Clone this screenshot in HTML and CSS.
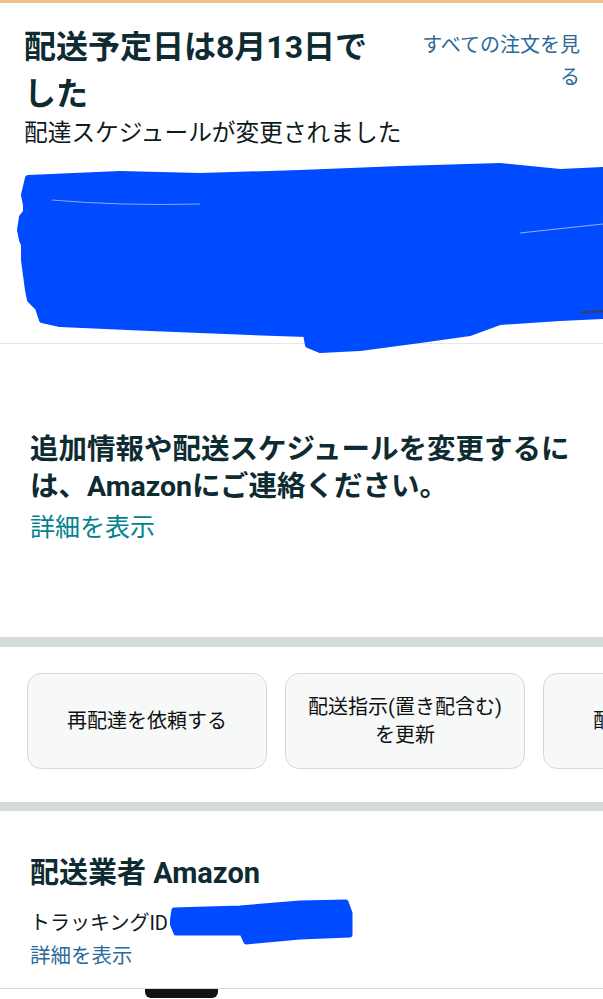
FILE: index.html
```html
<!DOCTYPE html>
<html lang="ja">
<head>
<meta charset="utf-8">
<title>配送状況</title>
<link rel="stylesheet" href="styles.css">
</head>
<body>
<div class="topbar"></div>
<section class="header">
  <div class="head-row">
    <h1 class="title">配送予定日は8月13日でした</h1>
    <a class="all-orders">すべての注文を見る</a>
  </div>
  <p class="subtitle">配達スケジュールが変更されました</p>
  <div class="product">
    <svg class="redact-main" viewBox="0 0 603 200" width="603" height="200" aria-hidden="true">
      <path fill="#004bff" stroke="#004bff" stroke-width="6" stroke-linejoin="round"
        d="M28 18 L120 14 L200 16 L300 13 L400 9 L500 6 L520 8 L560 12 L603 10 L603 156 L560 158 L500 162 L470 173 L420 180 L360 188 L320 190 L308 185 L306 174 L250 172 L150 168 L60 164 L42 160 L38 148 L30 140 L28 130 L26 115 L24 100 L24 85 L22 80 L20 70 L22 57 L26 52 L26 45 L24 35 Z"/>
      <path fill="none" stroke="#8fa6e8" stroke-width="1" d="M52 40 Q 120 46 200 44"/>
      <path fill="none" stroke="#9aaee6" stroke-width="1" d="M520 73 L603 64"/>
      <path fill="none" stroke="#3a3f55" stroke-width="2" d="M580 153 L603 151"/>
    </svg>
  </div>
</section>

<section class="contact">
  <p class="contact-text">追加情報や配送スケジュールを変更するには、Amazonにご連絡ください。</p>
  <a class="detail-teal">詳細を表示</a>
</section>

<div class="band"></div>

<section class="actions">
  <button class="action-btn">再配達を依頼する</button>
  <button class="action-btn">配送指示(置き配含む)<br>を更新</button>
  <button class="action-btn">配達状況を確認</button>
</section>

<div class="band band-2"></div>

<section class="carrier">
  <h2 class="carrier-title">配送業者 Amazon</h2>
  <div class="tracking">
    <span class="tracking-label">トラッキングID</span>
    <svg class="redact-small" viewBox="0 0 190 50" width="190" height="50" aria-hidden="true">
      <path fill="#004bff" stroke="#004bff" stroke-width="5" stroke-linejoin="round"
        d="M4 11 L70 9 L130 4 L176 3 L180 14 L180 36 L130 38 L76 43 L72 34 L6 34 L2 24 Z"/>
    </svg>
  </div>
  <a class="detail-blue">詳細を表示</a>
</section>
<div class="home-tab"></div>
</body>
</html>
```

FILE: styles.css
```css
* { box-sizing: border-box; }
html, body {
  margin: 0;
  padding: 0;
  background: #ffffff;
  width: 603px;
  height: 999px;
  overflow: hidden;
  font-family: Roboto, "Noto Sans CJK JP", "Noto Sans", sans-serif;
  color: #0f1111;
}
.topbar {
  height: 3px;
  background: #f3c28c;
}
.header {
  padding: 21px 23px 0 24px;
  border-bottom: 1px solid #e6e8e8;
}
.head-row {
  display: flex;
  align-items: flex-start;
  gap: 30px;
}
.title {
  flex: 1;
  margin: 0;
  font-size: 32px;
  line-height: 47px;
  font-weight: 700;
  color: #0e2b31;
}
.all-orders {
  width: 168px;
  flex: 0 0 168px;
  margin-top: 5px;
  text-align: right;
  font-size: 20px;
  line-height: 32px;
  color: #2b6a98;
}
.subtitle {
  margin: 0;
  font-size: 23.7px;
  line-height: 30px;
  color: #0f1a1c;
}
.product {
  position: relative;
  height: 195px;
  margin: 0 -23px 0 -24px;
}
.redact-main {
  position: absolute;
  left: 0;
  top: 12px;
  display: block;
}
.contact {
  height: 293px;
  padding: 87px 20px 0 30px;
}
.contact-text {
  margin: 0;
  font-size: 28.5px;
  line-height: 37px;
  font-weight: 700;
  color: #0e2b31;
}
.detail-teal {
  display: block;
  margin-top: 6px;
  font-size: 25px;
  line-height: 34px;
  color: #00838f;
}
.band {
  height: 10px;
  background: #d5dbdb;
}
.band-2 { height: 9px; }
.actions {
  display: flex;
  gap: 18px;
  padding: 26px 0 33px 27px;
  overflow: hidden;
}
.action-btn {
  flex: 0 0 240px;
  height: 96px;
  display: flex;
  align-items: center;
  justify-content: center;
  text-align: center;
  background: #f7f8f8;
  border: 1px solid #d5d9d9;
  border-radius: 14px;
  font-family: Roboto, "Noto Sans CJK JP", sans-serif;
  font-size: 20px;
  line-height: 28px;
  color: #0f1111;
  padding: 0 8px;
}
.carrier {
  height: 178px;
  padding: 43px 20px 0 30px;
  border-bottom: 1px solid #d5d9d9;
}
.carrier-title {
  margin: 0;
  font-size: 29px;
  line-height: 38px;
  font-weight: 700;
  color: #0e2b31;
}
.tracking {
  position: relative;
  margin-top: 16px;
  height: 30px;
  font-size: 20px;
  line-height: 30px;
  color: #0f1a1c;
}
.redact-small {
  position: absolute;
  left: 140px;
  top: -9px;
  display: block;
}
.detail-blue {
  display: block;
  margin-top: 3px;
  font-size: 20.5px;
  line-height: 30px;
  color: #2b6a98;
}
.home-tab {
  width: 73px;
  height: 9px;
  margin-left: 145px;
  background: #111312;
  border-radius: 0 0 6px 6px;
}
```
